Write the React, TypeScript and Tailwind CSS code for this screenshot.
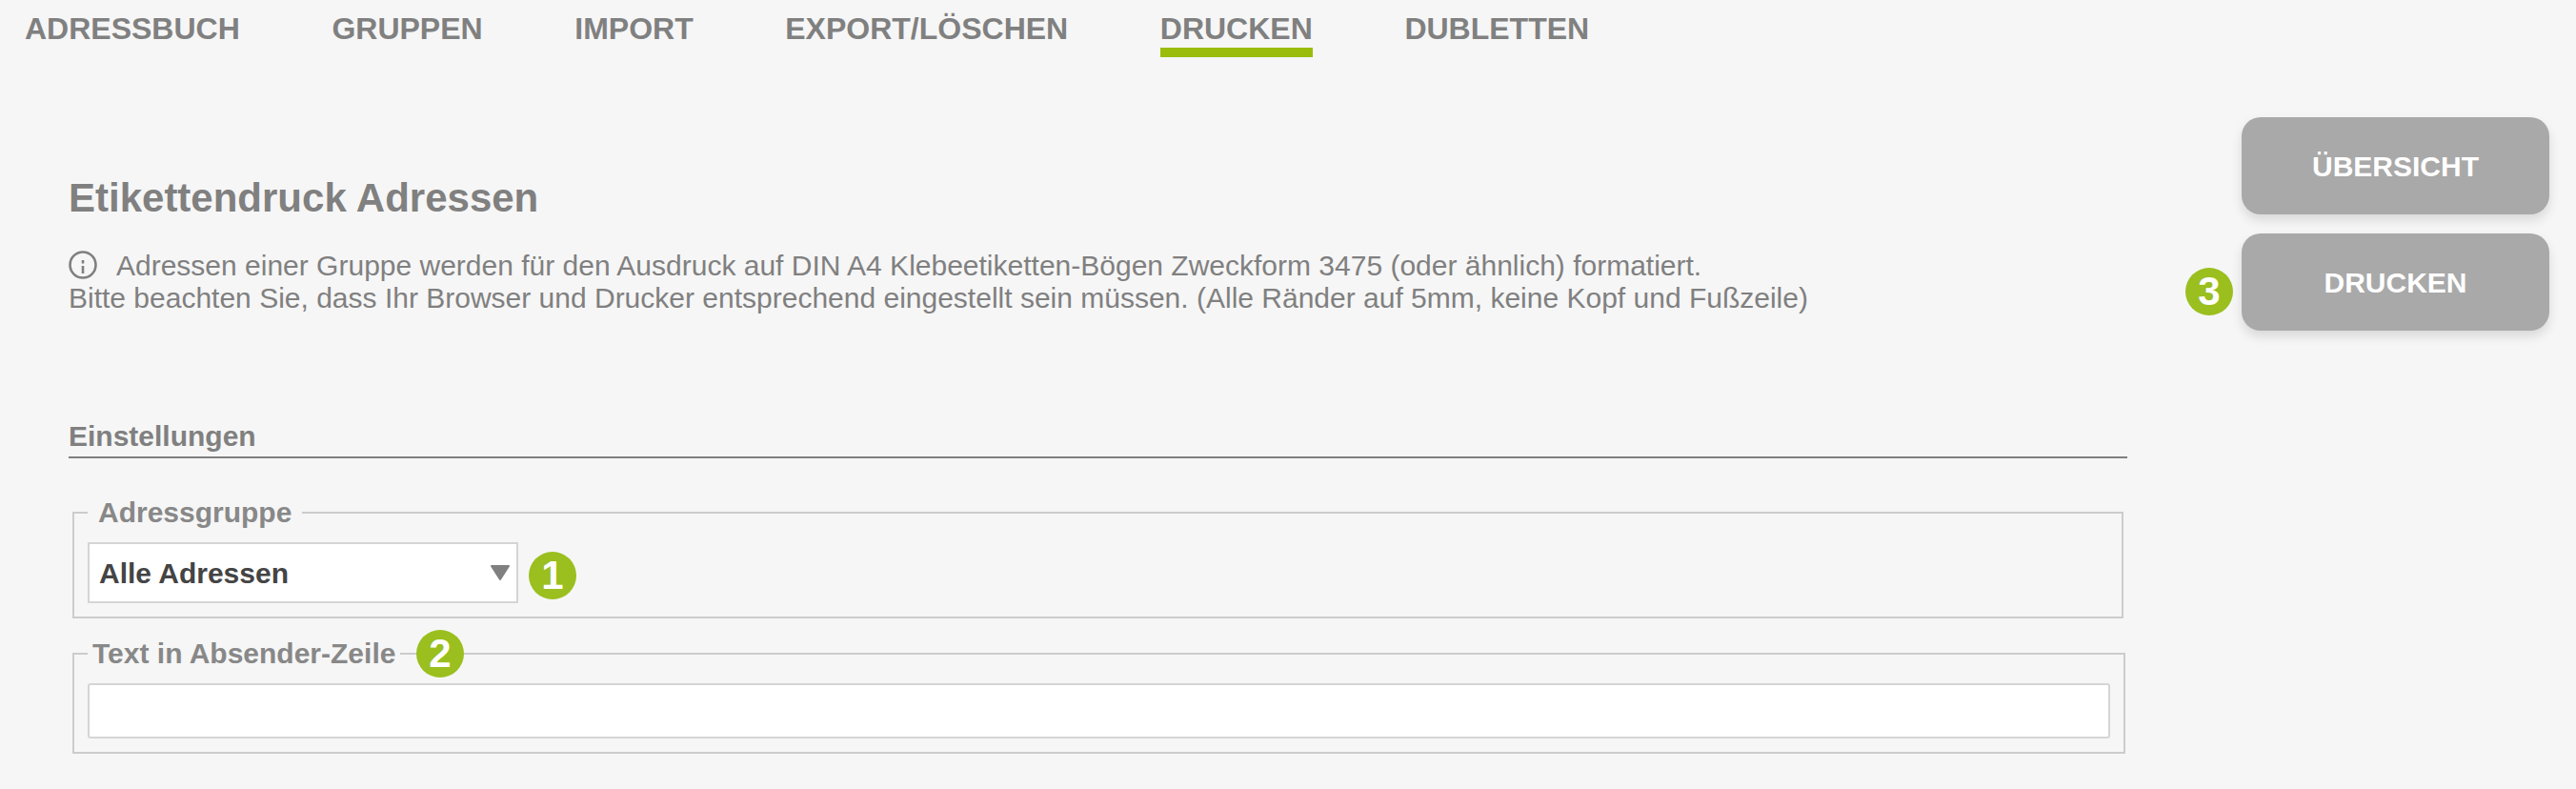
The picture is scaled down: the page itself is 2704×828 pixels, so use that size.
import React from "react";

const tabs = ["ADRESSBUCH", "GRUPPEN", "IMPORT", "EXPORT/LÖSCHEN", "DRUCKEN", "DUBLETTEN"];

function Badge({ n, className }: { n: number; className: string }) {
  return (
    <span className={`absolute flex h-[50px] w-[50px] items-center justify-center rounded-full bg-[#9abf1e] text-[42px] leading-none font-bold text-white ${className}`}>
      {n}
    </span>
  );
}

export default function App() {
  return (
    <main className="h-[828px] overflow-hidden bg-[#f6f6f6] font-['Liberation_Sans',Arial,sans-serif] text-[#808080]">
      <nav className="flex h-[60px] gap-[96.6px] pl-[26px]">
        {tabs.map((tab) => (
          <a
            key={tab}
            className={`h-[60px] text-[32px] leading-[60px] font-bold ${tab === "DRUCKEN" ? "border-b-[10px] border-[#99bd0a]" : ""}`}
          >
            {tab}
          </a>
        ))}
      </nav>

      <div className="flex">
        <section className="ml-[72px] w-[2161px]">
          <h1 className="mt-[125px] text-[42px] leading-[46px] font-bold">Etikettendruck Adressen</h1>
          <div className="mt-[31px] text-[30px] leading-[34px]">
            <p className="flex items-center">
              <svg width="30" height="30" viewBox="0 0 30 30" fill="none" stroke="#808080" strokeWidth="2.6" className="mr-[20px] mb-[2px]">
                <circle cx="15" cy="15" r="13.5" />
                <path d="M15 16v8M15 10v3.5" />
              </svg>
              Adressen einer Gruppe werden für den Ausdruck auf DIN A4 Klebeetiketten-Bögen Zweckform 3475 (oder ähnlich) formatiert.
            </p>
            <p>Bitte beachten Sie, dass Ihr Browser und Drucker entsprechend eingestellt sein müssen. (Alle Ränder auf 5mm, keine Kopf und Fußzeile)</p>
          </div>

          <h2 className="mt-[112px] border-b-2 border-[#808080] pb-[5px] text-[30px] leading-[32px] font-bold">Einstellungen</h2>

          <fieldset className="mt-[39px] ml-[4px] h-[129px] w-[2153px] border-2 border-[#cccccc] px-[14px]">
            <legend className="px-[11px] text-[30px] leading-[36px] font-bold text-[#888888]">Adressgruppe</legend>
            <div className="relative mt-[13px] w-[452px]">
              <select className="h-[64px] w-[452px] appearance-none border-2 border-[#d5d5d5] bg-white pl-[10px] text-[30px] font-bold text-[#444444]">
                <option>Alle Adressen</option>
              </select>
              <svg width="20" height="16" viewBox="0 0 20 16" className="absolute top-[24px] left-[423px]">
                <path d="M1 1h18L10 15z" fill="#808080" stroke="#808080" strokeWidth="2" strokeLinejoin="round" />
              </svg>
              <Badge n={1} className="top-[10px] left-[463px]" />
            </div>
          </fieldset>

          <fieldset className="relative mt-[19px] ml-[4px] h-[123px] w-[2153px] border-2 border-[#cccccc] px-[14px]">
            <legend className="px-[5px] text-[30px] leading-[36px] font-bold text-[#888888]">Text in Absender-Zeile</legend>
            <Badge n={2} className="top-[-43px] left-[359px]" />
            <input type="text" className="mt-[13px] block h-[58px] w-[2123px] rounded-[3px] border-2 border-[#d5d5d5] bg-white" />
          </fieldset>
        </section>

        <aside className="mt-[63px] ml-[120px] flex w-[323px] flex-col gap-[20px]">
          <button className="h-[102px] rounded-[20px] bg-[#a9a9a9] text-[30px] font-bold text-white shadow-[0_6px_12px_rgba(0,0,0,0.12)]">ÜBERSICHT</button>
          <div className="relative">
            <button className="h-[102px] w-full rounded-[20px] bg-[#a9a9a9] text-[30px] font-bold text-white shadow-[0_6px_12px_rgba(0,0,0,0.12)]">DRUCKEN</button>
            <Badge n={3} className="top-[36px] left-[-59px]" />
          </div>
        </aside>
      </div>
    </main>
  );
}
